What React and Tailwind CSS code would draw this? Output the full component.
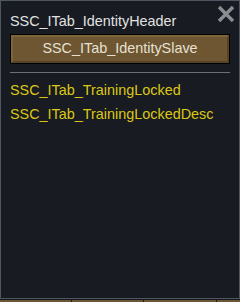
export default function App() {
  return (
    <div className="w-[240px] h-[302px] bg-[#15181d] flex flex-col overflow-hidden" style={{ fontFamily: '"Liberation Sans", Arial, sans-serif' }}>
      <div className="h-[299px] bg-[#181b21] border border-[#4d5661] flex flex-col px-[9px] relative">
        <div className="absolute right-[4px] top-[4px] w-[18px] h-[18px]">
          <svg viewBox="0 0 18 18" width="18" height="18">
            <path d="M2 2 L16 16 M16 2 L2 16" stroke="#8a8d91" strokeWidth="3.4" strokeLinecap="butt" />
          </svg>
        </div>
        <div className="mt-[12px] text-[14.4px] leading-[16px] text-[#e2e2e2]">SSC_ITab_IdentityHeader</div>
        <div className="mt-[5px] h-[30px] border border-black bg-[#6d5631] flex">
          <div className="flex-1 border-2 border-t-[#7e6539] border-l-[#7e6539] border-b-[#574426] border-r-[#574426] flex items-center justify-center text-[14.4px] text-[#e6e1d4]">
            SSC_ITab_IdentitySlave
          </div>
        </div>
        <div className="mt-[8px] h-[1px] bg-[#6b7078]" />
        <div className="mt-[9px] text-[14.4px] leading-[16px] text-[#dcc814]">SSC_ITab_TrainingLocked</div>
        <div className="mt-[8px] text-[14.4px] leading-[16px] text-[#dcc814]">SSC_ITab_TrainingLockedDesc</div>
      </div>
      <div className="h-[1px]" />
      <div className="flex gap-[1px] h-[2px]">
        <div className="w-[71px] bg-[#6b5735]" />
        <div className="w-[71px] bg-[#6b5735]" />
        <div className="w-[72px] bg-[#6b5735]" />
        <div className="flex-1 bg-[#6b5735]" />
      </div>
    </div>
  );
}
